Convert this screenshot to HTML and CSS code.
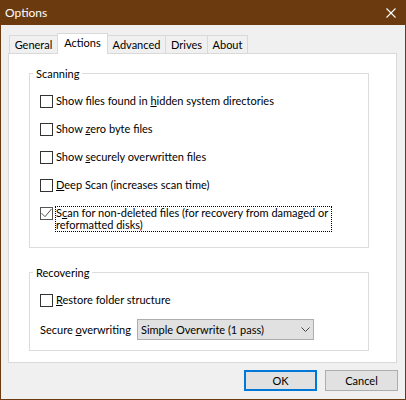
FILE: index.html
```html
<!DOCTYPE html>
<html lang="en">
<head>
<meta charset="utf-8">
<title>Options</title>
<link rel="stylesheet" href="styles.css">
</head>
<body>
<div class="window">
  <header class="titlebar">
    <span class="title">Options</span>
    <span class="close" aria-label="Close">
      <svg width="10" height="10" viewBox="0 0 10 10"><path d="M0.5 0.5L9.5 9.5M9.5 0.5L0.5 9.5" stroke="#fff" stroke-width="1.1" fill="none"/></svg>
    </span>
  </header>
  <div class="content">
    <div class="tabs">
      <div class="tab tab-general">General</div>
      <div class="tab tab-actions active">Actions</div>
      <div class="tab tab-advanced">Advanced</div>
      <div class="tab tab-drives">Drives</div>
      <div class="tab tab-about">About</div>
    </div>
    <div class="panel">
      <fieldset class="group">
        <legend>Scanning</legend>
        <div class="rows">
          <div class="check-row"><span class="box"></span><span class="label">Show files found in <u>h</u>idden system directories</span></div>
          <div class="check-row"><span class="box"></span><span class="label">Show <u>z</u>ero byte files</span></div>
          <div class="check-row"><span class="box"></span><span class="label">Show <u>s</u>ecurely overwritten files</span></div>
          <div class="check-row"><span class="box"></span><span class="label"><u>D</u>eep Scan (increases scan time)</span></div>
          <div class="check-row"><span class="box checked"><svg width="11" height="11" viewBox="0 0 11 11"><path d="M0.5 5.2L4 8.7L10.5 1" stroke="#555" stroke-width="1" fill="none"/></svg></span><span class="label focused">S<u>c</u>an for non-deleted files (for recovery from damaged or<br>reformatted disks)</span></div>
        </div>
      </fieldset>
      <fieldset class="group recovering">
        <legend>Recovering</legend>
        <div class="rows">
          <div class="check-row"><span class="box"></span><span class="label"><u>R</u>estore folder structure</span></div>
          <div class="select-row">
            <span class="select-label">Secure <u>o</u>verwriting</span>
            <div class="select">
              <span>Simple Overwrite (1 pass)</span>
              <svg width="9" height="5" viewBox="0 0 9 5"><path d="M0.5 0.5L4.5 4.5L8.5 0.5" stroke="#444" stroke-width="1" fill="none"/></svg>
            </div>
          </div>
        </div>
      </fieldset>
    </div>
    <div class="actions">
      <button class="btn default">OK</button>
      <button class="btn">Cancel</button>
    </div>
  </div>
</div>
</body>
</html>
```
FILE: styles.css
```css
* {
  box-sizing: border-box;
}

body {
  margin: 0;
  font-family: Lato, "Noto Sans", sans-serif;
  font-size: 11px;
  color: #000;
}

.window {
  width: 406px;
  height: 400px;
  border: 1px solid #6b3a0e;
  background: #f0f0f0;
  display: flex;
  flex-direction: column;
}

/* title bar */
.titlebar {
  flex: 0 0 24px;
  background: #6b3a0e;
  color: #fff;
  display: flex;
  align-items: center;
  justify-content: space-between;
  padding: 0 9px 0 4px;
}

.title {
  font-size: 12px;
  line-height: 16px;
}

.close {
  display: flex;
  width: 10px;
  height: 10px;
}

/* dialog body */
.content {
  flex: 1;
  display: flex;
  flex-direction: column;
  padding: 8px 8px 8px 7px;
}

.tabs {
  display: flex;
  align-items: flex-end;
  height: 20px;
  padding-left: 1px;
}

.tab {
  height: 18px;
  border: 1px solid #d9d9d9;
  border-bottom: 0;
  background: #f0f0f0;
  text-align: center;
  line-height: 17px;
  margin-left: -1px;
  white-space: nowrap;
}

.tab-general { width: 49px; margin-left: 0; }
.tab-actions { width: 51px; }
.tab-advanced { width: 59px; }
.tab-drives { width: 43px; }
.tab-about { width: 41px; }

.tab.active {
  height: 21px;
  background: #fff;
  margin-bottom: -1px;
  position: relative;
}

.panel {
  flex: 0 0 310px;
  border: 1px solid #d9d9d9;
  background: #fff;
  padding: 12px 27px 0 20px;
}

/* group boxes */
.group {
  margin: 0;
  padding: 0;
  border: 1px solid #dcdcdc;
}

.group legend {
  margin-left: 3px;
  padding: 0 3px;
  line-height: 15px;
}

.group.recovering {
  margin-top: 17px;
}

.rows {
  display: flex;
  flex-direction: column;
  gap: 14px;
  padding: 13px 0 15px 10px;
}

.recovering .rows {
  gap: 12px;
  padding-bottom: 10px;
}

.check-row {
  display: flex;
  align-items: flex-start;
}

.box {
  flex: 0 0 13px;
  height: 13px;
  margin-top: 1px;
  border: 1px solid #333;
  background: #fff;
  display: flex;
}

.box.checked {
  border-color: #555;
}

.label {
  margin-left: 2px;
  padding-right: 3px;
  border: 1px solid transparent;
  line-height: 12px;
  white-space: nowrap;
}

.label.focused {
  border: 1px dotted #000;
}

u {
  text-underline-offset: 1px;
}

/* combo box row */
.select-row {
  display: flex;
  align-items: center;
}

.select-label {
  flex: 0 0 97px;
  white-space: nowrap;
}

.select {
  width: 177px;
  height: 21px;
  border: 1px solid #adadad;
  background: #e1e1e1;
  display: flex;
  align-items: center;
  justify-content: space-between;
  padding: 0 3px 0 3px;
}

/* dialog buttons */
.actions {
  display: flex;
  justify-content: flex-end;
  gap: 8px;
  margin-top: 7px;
  margin-right: -1px;
}

.btn {
  width: 73px;
  height: 21px;
  border: 1px solid #adadad;
  background: #e1e1e1;
  font: inherit;
  color: #000;
  padding: 0;
}

.btn.default {
  border: 2px solid #0078d7;
}
```
